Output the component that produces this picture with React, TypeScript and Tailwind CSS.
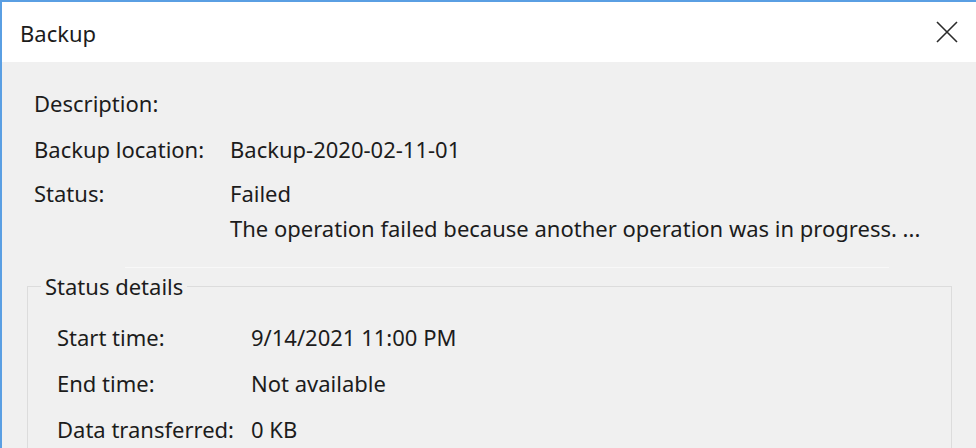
import React from "react";

const topRows = [
  { label: "Description:", value: "" },
  { label: "Backup location:", value: "Backup-2020-02-11-01" },
];

const details = [
  { label: "Start time:", value: "9/14/2021 11:00 PM" },
  { label: "End time:", value: "Not available" },
  { label: "Data transferred:", value: "0 KB" },
];

const CloseIcon = () => (
  <svg width="22" height="22" viewBox="0 0 22 22" fill="none">
    <path d="M1 1 L21 21 M21 1 L1 21" stroke="#2b2b2b" strokeWidth="1.6" />
  </svg>
);

export default function App() {
  return (
    <div className="w-[976px] h-[448px] overflow-hidden border-l-2 border-t-2 border-[#5a9fe3] bg-[#f0f0f0] text-[22px] text-[#1c1c1c] font-['Noto_Sans','Open_Sans',sans-serif]">
      {/* title bar */}
      <div className="h-[60px] bg-white flex items-center justify-between pl-[18px] pr-[18px]">
        <span className="leading-[28px] mt-[2px]">Backup</span>
        <CloseIcon />
      </div>

      <div className="pt-[18px]">
        {topRows.map((r) => (
          <div key={r.label} className="flex h-[46px] items-center pl-[32px]">
            <span className="w-[196px] shrink-0">{r.label}</span>
            <span>{r.value}</span>
          </div>
        ))}

        <div className="flex pl-[32px] mt-[4px] leading-[35px]">
          <span className="w-[196px] shrink-0">Status:</span>
          <div className="flex flex-col">
            <span>Failed</span>
            <span>The operation failed because another operation was in progress. ...</span>
          </div>
        </div>

        <div className="mt-[21px] ml-[123px] w-[764px] h-px bg-[#f8f8f8]" />

        <fieldset className="mt-[4px] ml-[25px] mr-[24px] border border-[#dcdcdc] pt-[14px] h-[200px]">
          <legend className="ml-[13px] px-[4px] leading-[28px]">Status details</legend>
          {details.map((d) => (
            <div key={d.label} className="flex h-[46px] items-center pl-[29px]">
              <span className="w-[194px] shrink-0">{d.label}</span>
              <span>{d.value}</span>
            </div>
          ))}
        </fieldset>
      </div>
    </div>
  );
}
